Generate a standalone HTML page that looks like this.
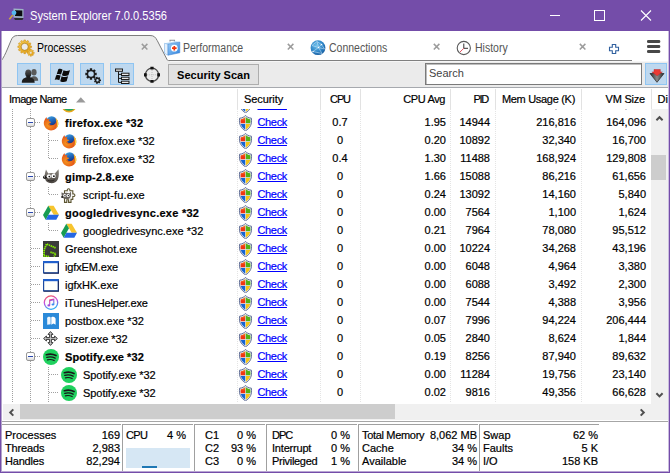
<!DOCTYPE html>
<html><head><meta charset="utf-8"><title>System Explorer</title>
<style>
*{box-sizing:border-box;margin:0;padding:0}
html,body{width:670px;height:473px;overflow:hidden;background:#744da9}
body{position:relative;font-family:"Liberation Sans",sans-serif;font-size:11px;color:#000}
div,span,i,a,svg{position:absolute}
.win{left:0;top:0;width:670px;height:473px;background:#744da9}
.title{left:30px;top:8px;color:#fff;font-size:12.5px;line-height:16px;white-space:nowrap;transform:scaleX(.888);transform-origin:0 0}
.client{left:1px;top:31px;width:668px;height:441px;background:#fff}
.toolbar{left:2px;top:61px;width:666px;height:26px;background:#ebebeb}
.tbline{left:2px;top:87px;width:666px;height:1px;background:#a6a9ae}
.tb{top:63px;width:24px;height:22px;background:#bed8ef;border:1px solid #8fc5f2}
.tabt{top:41px;font-size:12px;line-height:14px;color:#555;white-space:nowrap;transform:scaleX(.875);transform-origin:0 0}
.scan{left:168px;top:64px;width:91px;height:21px;background:#e1e1e1;border:1px solid #adadad;font-weight:bold;font-size:11px;line-height:21px;text-align:center;letter-spacing:0}
.search{left:425px;top:63px;width:217px;height:22px;background:#fff;border:1px solid #7a7a7a;box-shadow:inset 1px 1px 0 #bdbdbd;color:#444;font-size:11px;line-height:19px;padding-left:3px}
.hdr{left:2px;top:88px;width:666px;height:21px;background:#fff}
.hdr span{top:5px;line-height:13px;white-space:nowrap;-webkit-text-stroke:.2px currentColor}
.hdr i{top:1px;width:1px;height:20px;background:#e2e2e2}
.list{left:2px;top:109px;width:649px;height:295px;background:#fff;overflow:hidden}
.vsep{top:0;width:1px;height:294px;background-image:linear-gradient(180deg,#e4e4e4 50%,transparent 50%);background-size:1px 2px}
.r{left:0;width:649px;height:18px;-webkit-text-stroke:.2px currentColor}
.r span,.r a{top:3px;line-height:13px;white-space:nowrap}
.r .nm{top:4px;letter-spacing:.12px}.r .nm.b{font-weight:bold;letter-spacing:.25px}
.ic{top:2px;width:16px;height:16px}
.sh{left:236px;top:1.700px;width:16px;height:16px}
.ck{left:255.500px;color:#0000ff;text-decoration:underline;letter-spacing:-.35px}
.c{text-align:right}
.cpu{left:318px;width:40px;text-align:center}
.avg{left:360px;width:84px}
.pid{left:450px;width:38px}
.mem{left:495px;width:79px}
.vm{left:581px;width:63px}
.hl{top:9px;height:1px;background-image:linear-gradient(90deg,#a0a0a0 50%,transparent 50%);background-size:2px 1px}
.vl{width:1px;background-image:linear-gradient(180deg,#a0a0a0 50%,transparent 50%);background-size:1px 2px}
.ex{left:24px;top:5px;width:9px;height:9px;border:1px solid #989898;border-radius:2px;background:linear-gradient(#fff 40%,#dcdcdc)}
.ex:after{content:"";position:absolute;left:1px;top:3px;width:5px;height:1px;background:#2a48b0}
.vscroll{left:651px;top:109px;width:17px;height:311px;background:#f0f0f0}
.hscroll{left:3px;top:404px;width:648px;height:16px;background:#f0f0f0}
.thumb{background:#cdcdcd}
.status{left:1px;top:424px;width:667px;height:47px;background:#fff}
.p{top:0;height:47px;border-top:1px solid #a0a0a0;border-left:1px solid #a0a0a0}
.p span{line-height:13px;white-space:nowrap;-webkit-text-stroke:.2px currentColor}
.p .l{left:3px}
.p .v{text-align:right}
</style></head><body>
<svg width="0" height="0" style="position:absolute"><defs>
<radialGradient id="gFox" cx=".35" cy=".6" r=".75"><stop offset="0" stop-color="#f59a1e"/><stop offset=".6" stop-color="#e8601a"/><stop offset="1" stop-color="#c93a1a"/></radialGradient>
<linearGradient id="gFGlobe" x1="0" y1="0" x2=".4" y2="1"><stop offset="0" stop-color="#46aee8"/><stop offset=".55" stop-color="#1e63b8"/><stop offset="1" stop-color="#152a78"/></linearGradient>
<linearGradient id="gShR" x1="0" y1="0" x2="0" y2="1"><stop offset="0" stop-color="#f8962a"/><stop offset=".6" stop-color="#f03412"/></linearGradient><linearGradient id="gSilver" x1="0" y1="0" x2="1" y2="1"><stop offset="0" stop-color="#f4f4f4"/><stop offset=".5" stop-color="#9a9ca2"/><stop offset="1" stop-color="#5e6068"/></linearGradient>
<linearGradient id="gItR" x1="0" y1="0" x2=".3" y2="1"><stop offset="0" stop-color="#f8584a"/><stop offset=".5" stop-color="#c84ce0"/><stop offset="1" stop-color="#2aa8f4"/></linearGradient>
<linearGradient id="gItN" x1="0" y1="0" x2=".6" y2="1"><stop offset="0" stop-color="#f0486a"/><stop offset=".6" stop-color="#b04ad8"/><stop offset="1" stop-color="#3a8cf0"/></linearGradient>
<linearGradient id="gWil" x1="0" y1="0" x2="0" y2="1"><stop offset="0" stop-color="#8c8780"/><stop offset="1" stop-color="#4a4540"/></linearGradient>
<symbol id="shield" viewBox="0 0 16 16"><path d="M7.500 .4C6.400 1.800 4.500 2.900 1.600 3.200C1.300 6 1.400 8.600 2.400 10.600C3.400 12.800 5.200 14.600 7.500 15.800C9.800 14.600 11.600 12.800 12.600 10.600C13.600 8.600 13.700 6 13.400 3.200C10.500 2.900 8.600 1.800 7.500 .4z" fill="#e4e8f2" stroke="#56648e" stroke-width=".9"/><path d="M7.200 2C6.200 3.100 4.600 3.900 2.700 4.200C2.500 5.700 2.500 7 2.700 8.300H7.200z" fill="url(#gShR)"/><path d="M7.800 2C8.800 3.100 10.400 3.900 12.300 4.200C12.500 5.700 12.500 7 12.300 8.300H7.800z" fill="#52b214"/><path d="M2.800 8.900H7.200V14.500C5.100 13.300 3.500 11.400 2.800 8.900z" fill="#1464d4"/><path d="M12.200 8.900H7.800V14.500C9.900 13.300 11.500 11.400 12.200 8.900z" fill="#f6c512"/></symbol>
<symbol id="ff" viewBox="0 0 16 16"><circle cx="8.600" cy="6.600" r="5.400" fill="url(#gFGlobe)"/><path d="M1.300 5.800C1.700 4.200 2.700 3 3.600 2.300C3.600 3.300 3.900 4 4.500 4.500C5.200 3.800 6 3.600 6.700 3.700C5.900 4.600 5.700 5.500 6 6.300L8.200 6.900C7.800 7.800 6.900 8.200 6 8.200C6.600 9.700 8.400 10.500 10.200 9.900C11.700 9.400 12.700 8.300 13 7C13.400 5.400 13 4.200 12.400 3.100C14.500 4.600 15.600 7 15.200 9.700C14.600 13.100 11.700 15.400 8.100 15.400C4 15.400 .8 12.100 .8 8.100C.8 7.200 1 6.500 1.300 5.800z" fill="url(#gFox)"/><path d="M12.400 3.100C14.500 4.600 15.600 7 15.200 9.700C14.900 11.200 14.200 12.400 13.300 13.300C14.300 10.600 14.200 6.500 12.400 3.100z" fill="#f9d23c"/><path d="M6 8.200C6.600 9.700 8.400 10.500 10.200 9.900C9 11.500 6.200 11.300 5 9.500z" fill="#c8401a" opacity=".6"/></symbol>
<symbol id="gimp" viewBox="0 0 16 16"><path d="M3 .6L5.200 4.600C7.200 3.800 9.600 3.800 11.600 4.700L15.500 .2C16 3 16 7.200 15 10C13.600 13.400 10.200 14.600 7 14.100C4.400 13.700 2.800 12.300 2.300 10.600L1.600 6.500C1.800 4.500 2.400 2.500 3 .6z" fill="url(#gWil)"/><ellipse cx="1.900" cy="8.300" rx="1.900" ry="1.700" fill="#1c1a18"/><circle cx="1.500" cy="7.800" r=".6" fill="#eee"/><circle cx="5.900" cy="7.300" r="2.100" fill="#fff"/><circle cx="10.500" cy="6.900" r="2.200" fill="#fff"/><circle cx="6.300" cy="7.600" r=".9" fill="#111"/><circle cx="10.900" cy="7.200" r=".9" fill="#111"/><path d="M4.500 11.200C6.500 12.300 9.500 12.200 11.500 10.800" fill="none" stroke="#2a2622" stroke-width="1"/></symbol>
<symbol id="sfu" viewBox="0 0 16 16"><path d="M3.500 3.800H6.300C5.700 1 9.500 1 8.900 3.800H11.800V6.900C14.600 6.300 14.600 10.100 11.800 9.500V12.400H10V15.400H7.600V12.800H5.800V15.400H3.500z" fill="#fafaf8" stroke="#5c5430" stroke-width="1.100"/><path d="M.6 5.300L2.200 6.300C4 5.400 6.600 5.400 8.400 6.400L9.800 4.600C10.400 7 10.200 9.600 9 11C7.400 12.600 3.600 12.600 2 11C.6 9.600 .3 7.400 .6 5.300z" fill="#6a6560"/><circle cx="3.700" cy="8.600" r="1.500" fill="#fff"/><circle cx="7.100" cy="8.400" r="1.500" fill="#fff"/><circle cx="4" cy="8.800" r=".7" fill="#111"/><circle cx="7.400" cy="8.600" r=".7" fill="#111"/><ellipse cx="1.200" cy="10" rx="1.100" ry=".9" fill="#1c1a18"/></symbol>
<symbol id="gd" viewBox="0 0 16 16"><path d="M5.300 .8H10.600L16 9.700H10.700z" fill="#f7c42e"/><path d="M5.300 .8L8 5.300L2.700 14.700L0 10.100z" fill="#179c52"/><path d="M5.400 9.700H16L13.300 14.700H2.700z" fill="#2567e4"/></symbol>
<symbol id="gs" viewBox="0 0 16 16"><rect width="16" height="16" fill="#3a3a3a"/><path d="M12.600 6.900L3.600 3L1.200 8.500L.9 14.800L6.500 15.600M7.400 11.200L12.800 12.700L11 15.400" fill="none" stroke="#84ee00" stroke-width="1.800" stroke-dasharray="1.400 .6"/></symbol>
<symbol id="igfx" viewBox="0 0 16 16"><rect x=".6" y="2.600" width="14.600" height="11.200" fill="#fffffa" stroke="#1c4aa0" stroke-width="1.200"/><rect x="0" y="2" width="15.800" height="2.200" fill="#2060cc"/><path d="M.6 14.200H15.600V3.500" fill="none" stroke="#1a2a5c" stroke-width="1.100"/></symbol>
<symbol id="itunes" viewBox="0 0 16 16"><circle cx="8" cy="7.600" r="6.700" fill="#fdfdfd" stroke="url(#gItR)" stroke-width="1.300"/><path d="M6.700 10.300V5L10.800 4.100V9.400" fill="none" stroke="url(#gItN)" stroke-width="1.100"/><path d="M6.700 5L10.800 4.100V5.300L6.700 6.200z" fill="url(#gItN)"/><ellipse cx="5.800" cy="10.400" rx="1.400" ry="1.100" fill="#a04cdc"/><ellipse cx="9.900" cy="9.500" rx="1.400" ry="1.100" fill="#3a8cf0"/></symbol>
<symbol id="pb" viewBox="0 0 16 16"><rect width="16" height="16" fill="#2b8ad9"/><path d="M4.200 5.200C4.200 3.600 7.400 3.300 7.600 4.400V11.200L4.200 11.800z" fill="#eef6fd"/><path d="M8.300 4.200C10.600 3 12.600 4.400 12.600 6V11.800L10.500 10.600L8.300 11.800z" fill="#fff"/></symbol>
<symbol id="sizer" viewBox="0 0 16 16"><path d="M7.500 .6L10 3.400H8.400V6.600H11.600V5L14.400 7.500L11.600 10V8.400H8.400V11.600H10L7.500 14.400L5 11.600H6.600V8.400H3.400V10L.6 7.500L3.400 5V6.600H6.600V3.400H5z" fill="#c8c8c8" stroke="#262626" stroke-width=".9"/></symbol>
<symbol id="sp" viewBox="0 0 16 16"><circle cx="8" cy="8" r="8" fill="#1fd15e"/><path d="M3.300 5.700C6.500 4.700 10.200 5 13 6.500" fill="none" stroke="#16181a" stroke-width="1.700" stroke-linecap="round"/><path d="M3.800 8.400C6.500 7.600 9.600 7.900 12.100 9.200" fill="none" stroke="#16181a" stroke-width="1.400" stroke-linecap="round"/><path d="M4.400 10.900C6.600 10.300 9.100 10.500 11.200 11.600" fill="none" stroke="#16181a" stroke-width="1.100" stroke-linecap="round"/></symbol>
</defs></svg>
<div class="win">
<div class="title">System Explorer 7.0.0.5356</div>
<div class="client"></div>
<div class="toolbar"></div><div class="tbline"></div>
<div class="tb" style="left:17px"></div><div class="tb" style="left:50px"></div><div class="tb" style="left:80px"></div><div class="tb" style="left:110px"></div>
<div class="tb" style="left:645px;width:22px"></div>
<div class="scan">Security Scan</div>
<div class="search">Search</div>
<svg style="left:0;top:0" width="670" height="110" viewBox="0 0 670 110">
<defs><linearGradient id="gGold" x1="0" y1="0" x2="1" y2="1"><stop offset="0" stop-color="#f7cf52"/><stop offset="1" stop-color="#e09a10"/></linearGradient>
<radialGradient id="gGlobe" cx=".4" cy=".35" r=".7"><stop offset="0" stop-color="#6fc0ea"/><stop offset=".6" stop-color="#2f86c8"/><stop offset="1" stop-color="#165a9c"/></radialGradient>
<linearGradient id="gKit" x1="0" y1="0" x2="1" y2="1"><stop offset="0" stop-color="#9fd0f8"/><stop offset="1" stop-color="#2f82dc"/></linearGradient>
<linearGradient id="gFun" x1="0" y1="0" x2="1" y2="0"><stop offset="0" stop-color="#2a2a2a"/><stop offset=".5" stop-color="#8a8a8a"/><stop offset="1" stop-color="#2a2a2a"/></linearGradient><linearGradient id="gPers" x1="0" y1="0" x2="0" y2="1"><stop offset="0" stop-color="#555"/><stop offset="1" stop-color="#1c1c1c"/></linearGradient></defs>
<!-- title icon -->
<g><path d="M13.500 8.500L23.500 9V18L13.500 17.500z" fill="#9db4c4"/><path d="M15 10.300L22.300 10.600V16.200L15 16z" fill="#0c0c10"/><path d="M14 18H23.500L22.500 20H15z" fill="#2a2c30"/><path d="M12.800 15L9.300 19.300" stroke="#c9a545" stroke-width="1.600"/><circle cx="14" cy="12.800" r="2.400" fill="#55b8ee"/></g>
<!-- caption buttons -->
<path d="M550 15.500H560" stroke="#fff" stroke-width="1"/><rect x="594.500" y="10.500" width="10" height="10" fill="none" stroke="#fff" stroke-width="1"/><path d="M641 10.500L651 20.500M651 10.500L641 20.500" stroke="#fff" stroke-width="1.100"/>
<!-- tab strip -->
<path d="M169 60.500H632" stroke="#808080" stroke-width="1"/><path d="M170 61.500H668" stroke="#f6f6f6" stroke-width="1"/>
<path d="M1 61C3.500 58 5.500 53.500 7 50L11 40.500C12.300 37.300 13.800 35.500 17.500 35.500H150C154 35.500 155.500 37.200 157.300 40.700L167.200 59.800C167.400 60.200 167.800 60.500 168.500 60.500H170V62H1z" fill="#ebebeb"/>
<path d="M1 61C3.500 58 5.500 53.500 7 50L11 40.500C12.300 37.300 13.800 35.500 17.500 35.500H150C154 35.500 155.500 37.200 157.300 40.700L167.200 59.800C167.400 60.200 167.800 60.500 168.500 60.500H170" fill="none" stroke="#7c7c7c" stroke-width="1"/>
<!-- tab gear -->
<path fill-rule="evenodd" d="M30.11 45.81L31.55 45.99L31.55 47.61L30.11 47.79L29.88 48.65L31.04 49.52L30.23 50.93L28.89 50.36L28.26 50.99L28.83 52.33L27.42 53.14L26.55 51.98L25.69 52.21L25.51 53.65L23.89 53.65L23.71 52.21L22.85 51.98L21.98 53.14L20.57 52.33L21.14 50.99L20.51 50.36L19.17 50.93L18.36 49.52L19.52 48.65L19.29 47.79L17.85 47.61L17.85 45.99L19.29 45.81L19.52 44.95L18.36 44.08L19.17 42.67L20.51 43.24L21.14 42.61L20.57 41.27L21.98 40.46L22.85 41.62L23.71 41.39L23.89 39.95L25.51 39.95L25.69 41.39L26.55 41.62L27.42 40.46L28.83 41.27L28.26 42.61L28.89 43.24L30.23 42.67L31.04 44.08L29.88 44.95zM28.20 46.80A3.5 3.5 0 1 0 21.20 46.80A3.5 3.5 0 1 0 28.20 46.80z" fill="url(#gGold)" stroke="#c98a10" stroke-width=".5"/>
<circle cx="24.700" cy="46.800" r="3.700" fill="none" stroke="#9a7420" stroke-width=".6" opacity=".7"/>
<path fill-rule="evenodd" d="M33.21 52.13L34.25 52.18L34.25 53.42L33.21 53.47L32.98 54.03L33.67 54.80L32.80 55.67L32.03 54.98L31.47 55.21L31.42 56.25L30.18 56.25L30.13 55.21L29.57 54.98L28.80 55.67L27.93 54.80L28.62 54.03L28.39 53.47L27.35 53.42L27.35 52.18L28.39 52.13L28.62 51.57L27.93 50.80L28.80 49.93L29.57 50.62L30.13 50.39L30.18 49.35L31.42 49.35L31.47 50.39L32.03 50.62L32.80 49.93L33.67 50.80L32.98 51.57zM32.00 52.80A1.2 1.2 0 1 0 29.60 52.80A1.2 1.2 0 1 0 32.00 52.80z" fill="url(#gGold)" stroke="#c98a10" stroke-width=".4"/>
<!-- performance kit -->
<g><path d="M170 41.500V40.300H174.500V41.500" fill="none" stroke="#8a8f98" stroke-width="1.100"/><path d="M164.500 43.300L176 41.300L179.800 42L168 44.200z" fill="#b9dcfa"/><path d="M164.500 43.300L168 44.200V55.200L164.500 53.300z" fill="#e6f1fc" stroke="#6fa8e0" stroke-width=".5"/><path d="M168 44.200L179.800 42V52.800L168 55.200z" fill="url(#gKit)" stroke="#3a7fd0" stroke-width=".5"/><circle cx="174.300" cy="48.200" r="3.400" fill="#fff"/><path d="M172 48.200H176.600M174.300 45.900V50.500" stroke="#f0340c" stroke-width="1.700"/></g>
<!-- connections globe -->
<g><circle cx="318" cy="47.700" r="7.400" fill="url(#gGlobe)"/><path d="M312 45.500L317 41.500L321.500 44.500L324.500 49M313 51.500L318.500 47.500L321.500 44.500M317 41.500L318.500 47.500L322 53.500M312 45.500L318.500 47.500L324.500 49M313 51.500L322 53.500" fill="none" stroke="#d6ecfb" stroke-width=".6" opacity=".85"/><circle cx="321.500" cy="44.500" r=".8" fill="#fff"/><circle cx="313" cy="51.500" r=".7" fill="#fff"/><circle cx="318.500" cy="47.500" r=".7" fill="#fff"/></g>
<!-- history clock -->
<g><circle cx="463.800" cy="48" r="6.600" fill="#fff" stroke="#5a5a5a" stroke-width="1.100"/><path d="M463.800 43.500V48.300H468" fill="none" stroke="#333" stroke-width="1"/><path d="M463.800 48.300L460 52" stroke="#e04050" stroke-width=".9"/></g>
<!-- close marks -->
<path d="M141.8 43.9L147.4 49.5M147.4 43.9L141.8 49.5" stroke="#9c9c9c" stroke-width="1.500"/><path d="M287.8 43.9L293.4 49.5M293.4 43.9L287.8 49.5" stroke="#9c9c9c" stroke-width="1.500"/><path d="M433.8 43.9L439.4 49.5M439.4 43.9L433.8 49.5" stroke="#9c9c9c" stroke-width="1.500"/><path d="M579.8 43.9L585.4 49.5M585.4 43.9L579.8 49.5" stroke="#9c9c9c" stroke-width="1.500"/>
<!-- plus -->
<path d="M612.300 44.500H615.700V47.300H618.500V50.700H615.700V53.500H612.300V50.700H609.500V47.300H612.300z" fill="#fff" stroke="#2f5f9e" stroke-width="1.100"/>
<!-- hamburger -->
<rect x="647" y="40" width="13.300" height="3" rx="1.300" fill="#484848"/><rect x="647" y="45" width="13.300" height="3" rx="1.300" fill="#484848"/><rect x="647" y="50" width="13.300" height="3" rx="1.300" fill="#484848"/>
<!-- users -->
<g><ellipse cx="34" cy="72.300" rx="2.600" ry="3.300" fill="#5a5a5a"/><path d="M30 81C30 77.500 32 76.300 34 76.300C36.500 76.300 38.200 77.800 38.200 80.800z" fill="#5a5a5a"/><ellipse cx="28.300" cy="73.300" rx="3.100" ry="3.900" fill="url(#gPers)"/><path d="M21.800 82.700C21.800 78.600 24.300 78.200 26.500 77.200V75.500H30.200V77.200C32.300 78.200 34.700 78.600 34.700 82.700z" fill="#1e1e1e"/></g>
<!-- windows flag -->
<g fill="#0c0c0c"><path d="M58.300 69.200C59.800 68.600 61.300 68.800 62.600 69.800L61 74.600C59.700 73.800 58.300 73.700 56.600 74.400z"/><path d="M63.500 70.300C65.500 71.400 67.500 71.200 70 70.200L68.400 75.300C66.200 76.400 64.200 76.400 61.900 75.200z"/><path d="M56.200 75.300C57.900 74.700 59.300 74.800 60.700 75.600L59.300 80.200C57.900 79.400 56.400 79.300 54.700 80z"/><path d="M61.600 76.200C63.800 77.300 65.800 77.300 68.100 76.300L66.600 81.300C64.400 82.400 62.400 82.400 60.200 81.200z"/></g>
<!-- gears -->
<path fill-rule="evenodd" d="M95.12 72.77L96.69 72.87L96.69 75.13L95.12 75.23L94.78 76.04L95.82 77.22L94.22 78.82L93.04 77.78L92.23 78.12L92.13 79.69L89.87 79.69L89.77 78.12L88.96 77.78L87.78 78.82L86.18 77.22L87.22 76.04L86.88 75.23L85.31 75.13L85.31 72.87L86.88 72.77L87.22 71.96L86.18 70.78L87.78 69.18L88.96 70.22L89.77 69.88L89.87 68.31L92.13 68.31L92.23 69.88L93.04 70.22L94.22 69.18L95.82 70.78L94.78 71.96zM93.80 74.00A2.8 2.8 0 1 0 88.20 74.00A2.8 2.8 0 1 0 93.80 74.00z" fill="#1c1c1c"/><path fill-rule="evenodd" d="M99.96 79.45L101.01 79.50L101.01 81.10L99.96 81.15L99.70 81.69L100.31 82.54L99.06 83.54L98.37 82.75L97.78 82.88L97.50 83.90L95.94 83.54L96.13 82.51L95.65 82.13L94.69 82.54L93.99 81.10L94.92 80.60L94.92 80.00L93.99 79.50L94.69 78.06L95.65 78.47L96.13 78.09L95.94 77.06L97.50 76.70L97.78 77.72L98.37 77.85L99.06 77.06L100.31 78.06L99.70 78.91zM98.70 80.30A1.2 1.2 0 1 0 96.30 80.30A1.2 1.2 0 1 0 98.70 80.30z" fill="#1c1c1c"/>
<!-- tree -->
<g fill="#e8e8e8" stroke="#1c1c1c" stroke-width="1"><rect x="115.500" y="69" width="7" height="2.300"/><rect x="121.500" y="73.200" width="7.500" height="2.300"/><rect x="121.500" y="77.200" width="7.500" height="2.300"/><rect x="121.500" y="81.200" width="7.500" height="2.300"/><path d="M118.500 71.500V82.400H121.500M118.500 74.400H121.500M118.500 78.400H121.500" fill="none"/></g>
<!-- crosshair -->
<g><circle cx="152" cy="74.800" r="6.600" fill="none" stroke="#4a4a4a" stroke-width="1.300"/><path d="M152 66.800V69.600M152 80V82.800M144 74.800H146.800M157.200 74.800H160" stroke="#111" stroke-width="3.200"/><path d="M152 70V79.500M147.200 74.800H156.800" stroke="#b0b0b0" stroke-width=".8" stroke-dasharray="1 1"/></g>
<!-- filter -->
<g><path d="M650 73.500H664L657 82.300z" fill="url(#gFun)" stroke="#222" stroke-width=".7"/><path d="M654 69.500H660.300V72H662.300L657.100 75.800L651.900 72H654z" fill="#ea3a34" stroke="#c02a2a" stroke-width=".5"/></g>
</svg>
<div class="tabt" style="left:37px;color:#000">Processes</div>
<div class="tabt" style="left:183px">Performance</div>
<div class="tabt" style="left:329px">Connections</div>
<div class="tabt" style="left:475px">History</div>
<!-- header -->
<div class="hdr">
<span style="left:7px;letter-spacing:-.53px">Image Name</span>
<svg style="left:73.500px;top:9px" width="10" height="6" viewBox="0 0 10 6"><path d="M0 5.500L4.800 .3L9.600 5.500z" fill="#9a9a9a"/></svg>
<i style="left:235px"></i><span style="left:242px;letter-spacing:-.08px">Security</span>
<i style="left:318px"></i><span style="left:318px;width:40px;text-align:center;letter-spacing:-1.100px">CPU</span>
<i style="left:358px"></i><span style="left:359px;width:84px;text-align:right;letter-spacing:-.39px">CPU Avg</span>
<i style="left:448px"></i><span style="left:448px;width:38px;text-align:right;letter-spacing:-1.300px">PID</span>
<i style="left:493px"></i><span style="left:494px;width:79px;text-align:right;letter-spacing:-.3px">Mem Usage (K)</span>
<i style="left:579px"></i><span style="left:580px;width:63px;text-align:right;letter-spacing:-.21px">VM Size</span>
<i style="left:649px"></i><span style="left:655.500px">Di</span>
</div>
<!-- list -->
<div class="list">
<i class="vsep" style="left:235px"></i><i class="vsep" style="left:318px"></i><i class="vsep" style="left:358px"></i><i class="vsep" style="left:448px"></i><i class="vsep" style="left:493px"></i><i class="vsep" style="left:579px"></i>
<i class="vl" style="left:10px;top:0;height:294px"></i><i class="vl" style="left:28px;top:0;height:294px"></i>
<i class="vl" style="left:46px;top:24px;height:26px"></i>
<i class="vl" style="left:46px;top:78px;height:8px"></i>
<i class="vl" style="left:46px;top:114px;height:8px"></i>
<i class="vl" style="left:46px;top:258px;height:36px"></i>
<div class="r" style="top:-14px"><svg class="ic" style="left:59px" viewBox="0 0 16 16"><circle cx="8" cy="8" r="7.500" fill="#e8a91c"/><circle cx="8" cy="8" r="4" fill="#3b7ded"/><path d="M1 9A7.500 7.500 0 0 0 15 9z" fill="#1da462"/></svg><svg class="sh" viewBox="0 0 16 16"><use href="#shield"/></svg><a class="ck">Check</a><span class="c cpu">0</span><span class="c avg">0.00</span><span class="c pid">9216</span><span class="c mem">61,724</span><span class="c vm">41,380</span></div>
<div class="r" style="top:4px"><i class="ex"></i><i class="hl" style="left:33px;width:5px"></i><svg class="ic" style="left:41px" viewBox="0 0 16 16"><use href="#ff"/></svg><span class="nm b" style="left:63px;letter-spacing:0.25px">firefox.exe *32</span><svg class="sh" viewBox="0 0 16 16"><use href="#shield"/></svg><a class="ck">Check</a><span class="c cpu">0.7</span><span class="c avg">1.95</span><span class="c pid">14944</span><span class="c mem">216,816</span><span class="c vm">164,096</span></div>
<div class="r" style="top:22px"><i class="hl" style="left:47px;width:9px"></i><svg class="ic" style="left:59px" viewBox="0 0 16 16"><use href="#ff"/></svg><span class="nm" style="left:81px;letter-spacing:0.1px">firefox.exe *32</span><svg class="sh" viewBox="0 0 16 16"><use href="#shield"/></svg><a class="ck">Check</a><span class="c cpu">0</span><span class="c avg">0.20</span><span class="c pid">10892</span><span class="c mem">32,340</span><span class="c vm">16,700</span></div>
<div class="r" style="top:40px"><i class="hl" style="left:47px;width:9px"></i><svg class="ic" style="left:59px" viewBox="0 0 16 16"><use href="#ff"/></svg><span class="nm" style="left:81px;letter-spacing:0.1px">firefox.exe *32</span><svg class="sh" viewBox="0 0 16 16"><use href="#shield"/></svg><a class="ck">Check</a><span class="c cpu">0.4</span><span class="c avg">1.30</span><span class="c pid">11488</span><span class="c mem">168,924</span><span class="c vm">129,808</span></div>
<div class="r" style="top:58px"><i class="ex"></i><i class="hl" style="left:33px;width:5px"></i><svg class="ic" style="left:41px" viewBox="0 0 16 16"><use href="#gimp"/></svg><span class="nm b" style="left:63px;letter-spacing:0.2px">gimp-2.8.exe</span><svg class="sh" viewBox="0 0 16 16"><use href="#shield"/></svg><a class="ck">Check</a><span class="c cpu">0</span><span class="c avg">1.66</span><span class="c pid">15088</span><span class="c mem">86,216</span><span class="c vm">61,656</span></div>
<div class="r" style="top:76px"><i class="hl" style="left:47px;width:9px"></i><svg class="ic" style="left:59px" viewBox="0 0 16 16"><use href="#sfu"/></svg><span class="nm" style="left:81px;letter-spacing:0.15px">script-fu.exe</span><svg class="sh" viewBox="0 0 16 16"><use href="#shield"/></svg><a class="ck">Check</a><span class="c cpu">0</span><span class="c avg">0.24</span><span class="c pid">13092</span><span class="c mem">14,160</span><span class="c vm">5,840</span></div>
<div class="r" style="top:94px"><i class="ex"></i><i class="hl" style="left:33px;width:5px"></i><svg class="ic" style="left:41px" viewBox="0 0 16 16"><use href="#gd"/></svg><span class="nm b" style="left:63px;letter-spacing:0.25px">googledrivesync.exe *32</span><svg class="sh" viewBox="0 0 16 16"><use href="#shield"/></svg><a class="ck">Check</a><span class="c cpu">0</span><span class="c avg">0.00</span><span class="c pid">7564</span><span class="c mem">1,100</span><span class="c vm">1,624</span></div>
<div class="r" style="top:112px"><i class="hl" style="left:47px;width:9px"></i><svg class="ic" style="left:59px" viewBox="0 0 16 16"><use href="#gd"/></svg><span class="nm" style="left:81px;letter-spacing:0.02px">googledrivesync.exe *32</span><svg class="sh" viewBox="0 0 16 16"><use href="#shield"/></svg><a class="ck">Check</a><span class="c cpu">0</span><span class="c avg">0.21</span><span class="c pid">7964</span><span class="c mem">78,080</span><span class="c vm">95,512</span></div>
<div class="r" style="top:130px"><i class="hl" style="left:29px;width:9px"></i><svg class="ic" style="left:41px" viewBox="0 0 16 16"><use href="#gs"/></svg><span class="nm" style="left:63px;letter-spacing:-0.01px">Greenshot.exe</span><svg class="sh" viewBox="0 0 16 16"><use href="#shield"/></svg><a class="ck">Check</a><span class="c cpu">0</span><span class="c avg">0.00</span><span class="c pid">10224</span><span class="c mem">34,268</span><span class="c vm">43,196</span></div>
<div class="r" style="top:148px"><i class="hl" style="left:29px;width:9px"></i><svg class="ic" style="left:41px" viewBox="0 0 16 16"><use href="#igfx"/></svg><span class="nm" style="left:63px;letter-spacing:-0.14px">igfxEM.exe</span><svg class="sh" viewBox="0 0 16 16"><use href="#shield"/></svg><a class="ck">Check</a><span class="c cpu">0</span><span class="c avg">0.00</span><span class="c pid">6048</span><span class="c mem">4,964</span><span class="c vm">3,380</span></div>
<div class="r" style="top:166px"><i class="hl" style="left:29px;width:9px"></i><svg class="ic" style="left:41px" viewBox="0 0 16 16"><use href="#igfx"/></svg><span class="nm" style="left:63px;letter-spacing:-0.02px">igfxHK.exe</span><svg class="sh" viewBox="0 0 16 16"><use href="#shield"/></svg><a class="ck">Check</a><span class="c cpu">0</span><span class="c avg">0.00</span><span class="c pid">6088</span><span class="c mem">3,492</span><span class="c vm">2,300</span></div>
<div class="r" style="top:184px"><i class="hl" style="left:29px;width:9px"></i><svg class="ic" style="left:41px" viewBox="0 0 16 16"><use href="#itunes"/></svg><span class="nm" style="left:63px;letter-spacing:-0.155px">iTunesHelper.exe</span><svg class="sh" viewBox="0 0 16 16"><use href="#shield"/></svg><a class="ck">Check</a><span class="c cpu">0</span><span class="c avg">0.00</span><span class="c pid">7544</span><span class="c mem">4,388</span><span class="c vm">3,956</span></div>
<div class="r" style="top:202px"><i class="hl" style="left:29px;width:9px"></i><svg class="ic" style="left:41px" viewBox="0 0 16 16"><use href="#pb"/></svg><span class="nm" style="left:63px;letter-spacing:0px">postbox.exe *32</span><svg class="sh" viewBox="0 0 16 16"><use href="#shield"/></svg><a class="ck">Check</a><span class="c cpu">0</span><span class="c avg">0.07</span><span class="c pid">7996</span><span class="c mem">94,224</span><span class="c vm">206,444</span></div>
<div class="r" style="top:220px"><i class="hl" style="left:29px;width:9px"></i><svg class="ic" style="left:41px" viewBox="0 0 16 16"><use href="#sizer"/></svg><span class="nm" style="left:63px;letter-spacing:-0.02px">sizer.exe *32</span><svg class="sh" viewBox="0 0 16 16"><use href="#shield"/></svg><a class="ck">Check</a><span class="c cpu">0</span><span class="c avg">0.05</span><span class="c pid">2840</span><span class="c mem">8,624</span><span class="c vm">1,844</span></div>
<div class="r" style="top:238px"><i class="ex"></i><i class="hl" style="left:33px;width:5px"></i><svg class="ic" style="left:41px" viewBox="0 0 16 16"><use href="#sp"/></svg><span class="nm b" style="left:63px;letter-spacing:0.1px">Spotify.exe *32</span><svg class="sh" viewBox="0 0 16 16"><use href="#shield"/></svg><a class="ck">Check</a><span class="c cpu">0</span><span class="c avg">0.19</span><span class="c pid">8256</span><span class="c mem">87,940</span><span class="c vm">89,632</span></div>
<div class="r" style="top:256px"><i class="hl" style="left:47px;width:9px"></i><svg class="ic" style="left:59px" viewBox="0 0 16 16"><use href="#sp"/></svg><span class="nm" style="left:81px;letter-spacing:-0.04px">Spotify.exe *32</span><svg class="sh" viewBox="0 0 16 16"><use href="#shield"/></svg><a class="ck">Check</a><span class="c cpu">0</span><span class="c avg">0.00</span><span class="c pid">11284</span><span class="c mem">19,756</span><span class="c vm">23,140</span></div>
<div class="r" style="top:274px"><i class="hl" style="left:47px;width:9px"></i><svg class="ic" style="left:59px" viewBox="0 0 16 16"><use href="#sp"/></svg><span class="nm" style="left:81px;letter-spacing:-0.04px">Spotify.exe *32</span><svg class="sh" viewBox="0 0 16 16"><use href="#shield"/></svg><a class="ck">Check</a><span class="c cpu">0</span><span class="c avg">0.02</span><span class="c pid">9816</span><span class="c mem">49,356</span><span class="c vm">66,628</span></div>
</div>
<!-- scrollbars -->
<div class="vscroll"><div class="thumb" style="left:0;top:46px;width:15px;height:25px"></div>
<svg style="left:3.500px;top:6px" width="9" height="7" viewBox="0 0 9 7"><path d="M1.400 5.300L4.500 2.200L7.600 5.300" fill="none" stroke="#505050" stroke-width="2"/></svg>
<svg style="left:3.500px;top:283px" width="9" height="7" viewBox="0 0 9 7"><path d="M1.400 1.300L4.500 4.400L7.600 1.300" fill="none" stroke="#505050" stroke-width="2"/></svg></div>
<div class="hscroll"><div class="thumb" style="left:17px;top:0;width:374.500px;height:15px"></div>
<svg style="left:4.500px;top:3.500px" width="7" height="9" viewBox="0 0 7 9"><path d="M5.300 1.400L2.200 4.500L5.300 7.600" fill="none" stroke="#505050" stroke-width="2"/></svg>
<svg style="left:635.500px;top:3.500px" width="7" height="9" viewBox="0 0 7 9"><path d="M1.700 1.400L4.800 4.500L1.700 7.600" fill="none" stroke="#505050" stroke-width="2"/></svg></div>
<div style="left:1px;top:421px;width:668px;height:1px;background:#a6a6a6"></div>
<!-- status -->
<div class="status">
<div class="p" style="left:0;width:120px"><span class="l" style="top:4px">Processes</span><span class="l" style="top:17px;letter-spacing:-.15px">Threads</span><span class="l" style="top:30px;letter-spacing:-.2px">Handles</span><span class="v" style="top:4px;right:1px">169</span><span class="v" style="top:17px;right:1px">2,983</span><span class="v" style="top:30px;right:1px">82,294</span></div>
<div class="p" style="left:121px;width:71px"><span class="l" style="top:4px;letter-spacing:-.7px">CPU</span><span class="v" style="top:4px;right:7px">4 %</span><div style="left:3px;top:23px;width:64px;height:20px;background:#d6e7f4"></div><div style="left:19px;top:41px;width:15px;height:2px;background:#1f78b4"></div></div>
<div class="p" style="left:193px;width:71px"><span class="l" style="top:4px;left:10px">C1</span><span class="l" style="top:17px;left:10px">C2</span><span class="l" style="top:30px;left:10px">C3</span><span class="v" style="top:4px;right:9px">0 %</span><span class="v" style="top:17px;right:9px">93 %</span><span class="v" style="top:30px;right:9px">0 %</span></div>
<div class="p" style="left:265px;width:91px"><span class="l" style="top:4px;left:5px;letter-spacing:-1px">DPC</span><span class="l" style="top:17px;left:5px;letter-spacing:-.2px">Interrupt</span><span class="l" style="top:30px;left:5px;letter-spacing:-.3px">Privileged</span><span class="v" style="top:4px;right:7px">0 %</span><span class="v" style="top:17px;right:7px">0 %</span><span class="v" style="top:30px;right:7px">1 %</span></div>
<div class="p" style="left:357px;width:120px"><span class="l" style="top:4px;letter-spacing:-.32px">Total Memory</span><span class="l" style="top:17px">Cache</span><span class="l" style="top:30px">Available</span><span class="v" style="top:4px;right:1px">8,062 MB</span><span class="v" style="top:17px;right:1px">34 %</span><span class="v" style="top:30px;right:1px">34 %</span></div>
<div class="p" style="left:478px;width:120px"><span class="l" style="top:4px">Swap</span><span class="l" style="top:17px">Faults</span><span class="l" style="top:30px">I/O</span><span class="v" style="top:4px;right:1px">62 %</span><span class="v" style="top:17px;right:1px">5 K</span><span class="v" style="top:30px;right:1px">158 KB</span></div>
</div>
<div style="left:1px;top:31px;width:1px;height:440px;background:#b3a4ca"></div><div style="left:668px;top:31px;width:1px;height:440px;background:#cbbde0"></div><div style="left:1px;top:471px;width:668px;height:1px;background:#b9a6d4"></div>
</div>
</body></html>
